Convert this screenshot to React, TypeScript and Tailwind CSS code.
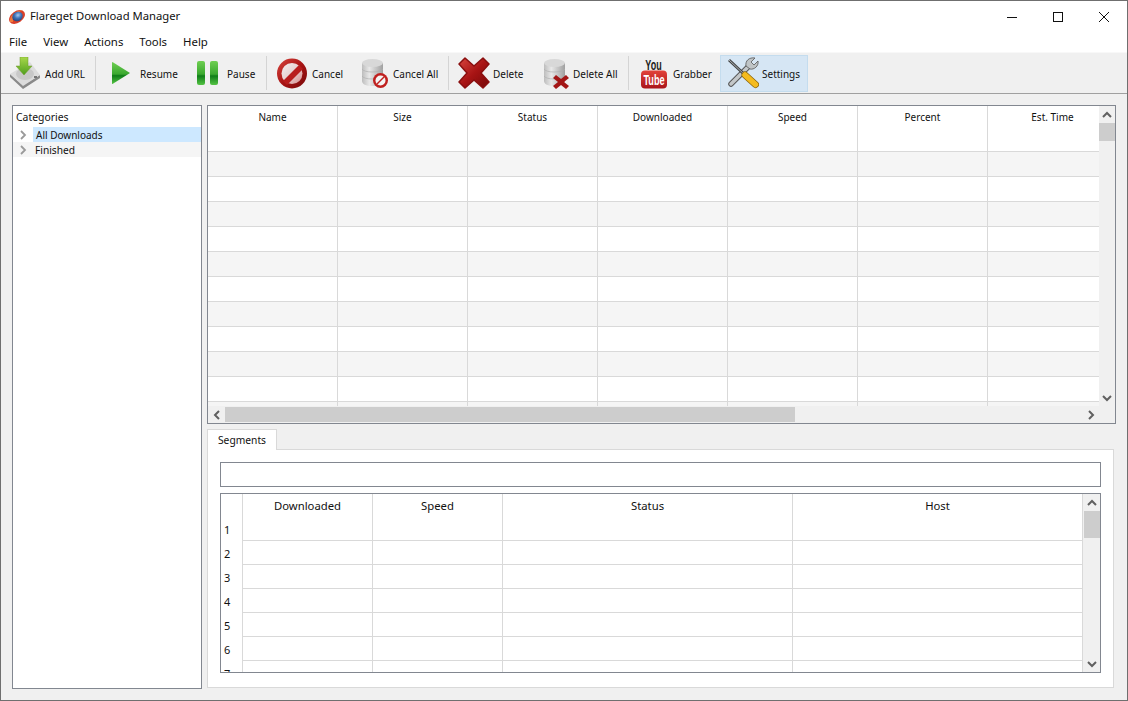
const uiFont = "font-['Noto_Sans',sans-serif]";

const FlareIcon = () => (
  <svg width="18" height="16" viewBox="0 0 18 16">
    <defs>
      <radialGradient id="flare" cx="0.6" cy="0.4" r="0.65">
        <stop offset="0" stopColor="#a5c8ee" />
        <stop offset="0.5" stopColor="#3f73b8" />
        <stop offset="1" stopColor="#24407a" />
      </radialGradient>
    </defs>
    <ellipse cx="9" cy="8" rx="8.8" ry="5.8" transform="rotate(-35 9 8)" fill="#d9402a" />
    <path d="M2 13 C1 8 6 2 15 1 C10 3 5 7 5 13Z" fill="#f07a3c" />
    <ellipse cx="9.5" cy="7.5" rx="5.4" ry="4.6" transform="rotate(-30 9.5 7.5)" fill="url(#flare)" />
  </svg>
);

const GradDefs = () => (
  <svg width="0" height="0" className="absolute">
    <defs>
      <linearGradient id="green" x1="0" y1="0" x2="0" y2="1">
        <stop offset="0" stopColor="#6fcf52" />
        <stop offset="0.55" stopColor="#3aa82f" />
        <stop offset="0.62" stopColor="#0f7d18" />
        <stop offset="1" stopColor="#55c444" />
      </linearGradient>
      <linearGradient id="arrowGreen" x1="0" y1="0" x2="0" y2="1">
        <stop offset="0" stopColor="#a8d84a" />
        <stop offset="1" stopColor="#4f9e1e" />
      </linearGradient>
      <linearGradient id="red" x1="0" y1="0" x2="1" y2="1">
        <stop offset="0" stopColor="#d8453e" />
        <stop offset="0.5" stopColor="#a81414" />
        <stop offset="1" stopColor="#760808" />
      </linearGradient>
      <linearGradient id="innerRed" x1="0" y1="0" x2="1" y2="1">
        <stop offset="0" stopColor="#f4f0f0" />
        <stop offset="0.5" stopColor="#e6d0d0" />
        <stop offset="1" stopColor="#d88888" />
      </linearGradient>
      <linearGradient id="metal" x1="0" y1="0" x2="1" y2="0">
        <stop offset="0" stopColor="#bdbdbd" />
        <stop offset="0.35" stopColor="#e8e8e8" />
        <stop offset="1" stopColor="#a0a0a0" />
      </linearGradient>
      <linearGradient id="yt" x1="0" y1="0" x2="0" y2="1">
        <stop offset="0" stopColor="#e2433a" />
        <stop offset="1" stopColor="#a9141a" />
      </linearGradient>
    </defs>
  </svg>
);

const AddUrlIcon = () => (
  <svg width="33" height="32" viewBox="0 0 33 32">
    <path d="M1 17 L14 28 L31 18 L31 21 L14 32 L1 20Z" fill="#8a8a8a" />
    <path d="M1 17 L21 5 L31 18 L14 29Z" fill="#dcdcdc" />
    <ellipse cx="16" cy="17" rx="9" ry="6" fill="#c8c8c8" />
    <path d="M11 0 H19 V9 H23 L15 18 L7 9 H11Z" fill="url(#arrowGreen)" stroke="#6f9a2a" strokeWidth="0.5" />
    <rect x="25" y="19" width="3" height="2" fill="#777" />
  </svg>
);

const ResumeIcon = () => (
  <svg width="32" height="26" viewBox="0 0 32 26">
    <path d="M7.5 2 L25 13 L7.5 24 Q7 24 7 23.5 V2.5 Q7 2 7.5 2Z" fill="url(#green)" />
  </svg>
);

const PauseIcon = () => (
  <svg width="31" height="26" viewBox="0 0 31 26">
    <rect x="4" y="1" width="8" height="24" rx="2" fill="url(#green)" />
    <rect x="17" y="1" width="8" height="24" rx="2" fill="url(#green)" />
  </svg>
);

const CancelIcon = () => (
  <svg width="33" height="32" viewBox="0 0 33 32">
    <circle cx="16" cy="16.5" r="15" fill="url(#red)" />
    <circle cx="16" cy="16.5" r="10.5" fill="url(#innerRed)" />
    <path d="M7 24 L23 8 L27 12 L11 28 Z" fill="#b81c1c" />
  </svg>
);

const Cylinder = () => (
  <>
    <path d="M2 6 V24 C2 27 6 29 12 29 C18 29 23 27 23 24 V6Z" fill="url(#metal)" />
    <ellipse cx="12.5" cy="6" rx="10.5" ry="4" fill="#d8d8d8" />
    <path d="M2 12 C4 16 20 16 23 12 M2 19 C4 23 20 23 23 19" stroke="#b0b0b0" strokeWidth="0.7" fill="none" />
  </>
);

const CancelAllIcon = () => (
  <svg width="32" height="32" viewBox="0 0 32 32">
    <g transform="translate(2 0)">
      <Cylinder />
    </g>
    <circle cx="22.5" cy="23.5" r="7.5" fill="#c0201f" />
    <circle cx="22.5" cy="23.5" r="5" fill="#f4f4f4" />
    <path d="M18.5 26.5 L25.5 19.5 L26.5 20.5 L19.5 27.5Z" fill="#c0201f" />
  </svg>
);

const DeleteIcon = () => (
  <svg width="32" height="32" viewBox="0 0 32 32">
    <path d="M1 7 L7 1 L16 9 L25 1 L31 7 L23 16 L31 25 L25 31 L16 23 L7 31 L1 25 L9 16Z" fill="url(#red)" strokeLinejoin="round" stroke="#8a0f0f" strokeWidth="1.5" />
  </svg>
);

const DeleteAllIcon = () => (
  <svg width="28" height="32" viewBox="0 0 28 32">
    <Cylinder />
    <path d="M11 21 L14 18 L19 22 L24 18 L27 21 L22 25 L27 29 L24 32 L19 28 L14 32 L11 29 L16 25Z" fill="#a31616" />
  </svg>
);

const YoutubeIcon = () => (
  <svg width="32" height="32" viewBox="0 0 32 32" className="overflow-visible">
    <text transform="translate(15.5 12.5) scale(0.6 1)" textAnchor="middle" fontFamily="'Liberation Sans', sans-serif" fontWeight="700" fontSize="15" fill="#222">You</text>
    <rect x="3" y="13.5" width="26" height="18" rx="4" fill="url(#yt)" />
    <text transform="translate(16 27.5) scale(0.61 1)" textAnchor="middle" fontFamily="'Liberation Sans', sans-serif" fontWeight="700" fontSize="15" fill="#fff">Tube</text>
  </svg>
);

const SettingsIcon = () => (
  <svg width="32" height="32" viewBox="0 0 32 32">
    {/* wrench */}
    <path d="M4 27 L22 9" stroke="#555" strokeWidth="5.5" strokeLinecap="round" />
    <path d="M4 27 L22 9" stroke="#c4c8ca" strokeWidth="3.5" strokeLinecap="round" />
    <path d="M19 9 C18 4 22 0 28 1 L24 5 L27 8 L31 4 C32 9 27 13 23 12Z" fill="#bfc4c6" stroke="#555" strokeWidth="0.8" />
    {/* screwdriver */}
    <path d="M2 3 L18 18" stroke="#444" strokeWidth="3" />
    <path d="M2 3 L18 18" stroke="#aab0b4" strokeWidth="1" />
    <path d="M18 18 L28.5 27.5" stroke="#8a650c" strokeWidth="7" strokeLinecap="round" />
    <path d="M18 18 L28.5 27.5" stroke="#f4bb1f" strokeWidth="5.5" strokeLinecap="round" />
  </svg>
);

const ToolButton = ({ icon, label, className }: { icon: React.ReactNode; label: string; className: string }) => (
  <div className={`flex items-center gap-[3px] pl-[6px] shrink-0 ${className}`}>
    {icon}
    <span className="text-[10px] text-[#111] whitespace-nowrap pt-[2px]">{label}</span>
  </div>
);

const ToolSep = () => <div className="w-px h-[34px] bg-[#d4d4d4] ml-[2px] mr-[3px] shrink-0" />;

const Chevron = ({ dir }: { dir: "up" | "down" | "left" | "right" }) => {
  const paths = {
    up: "M1 6 L5 2 L9 6",
    down: "M1 2 L5 6 L9 2",
    left: "M6 1 L2 5 L6 9",
    right: "M2 1 L6 5 L2 9",
  };
  const vertical = dir === "up" || dir === "down";
  return (
    <svg width={vertical ? 10 : 8} height={vertical ? 8 : 10} viewBox={vertical ? "0 0 10 8" : "0 0 8 10"}>
      <path d={paths[dir]} stroke="#606060" strokeWidth="2" fill="none" />
    </svg>
  );
};

const TreeArrow = () => (
  <svg width="7" height="10" viewBox="0 0 7 10" className="shrink-0">
    <path d="M1 1 L5 5 L1 9" stroke="#9a9a9a" strokeWidth="1.8" fill="none" />
  </svg>
);

const mainColumns = ["Name", "Size", "Status", "Downloaded", "Speed", "Percent", "Est. Time"];
const segColumns = [
  { name: "Downloaded", width: "w-[130px]" },
  { name: "Speed", width: "w-[130px]" },
  { name: "Status", width: "w-[290px]" },
  { name: "Host", width: "w-[290px]" },
];

const DownloadsTable = () => (
  <div className="h-[319px] border border-[#828790] bg-white flex flex-col shrink-0">
    <div className="flex h-[300px]">
      <div className="flex-1 overflow-hidden">
        <div className="flex h-[46px] border-b border-[#d9d9d9] w-[910px]">
          {mainColumns.map((c) => (
            <div key={c} className="w-[130px] shrink-0 border-r border-[#d9d9d9] text-center text-[10px] leading-[15px] text-[#111] pt-[4px]">
              {c}
            </div>
          ))}
        </div>
        {[...Array(11)].map((_, i) => (
          <div key={i} className={`flex h-[25px] border-b border-[#d9d9d9] w-[910px] ${i % 2 === 0 ? "bg-[#f5f5f5]" : "bg-white"}`}>
            {mainColumns.map((c) => (
              <div key={c} className="w-[130px] shrink-0 border-r border-[#d9d9d9]" />
            ))}
          </div>
        ))}
      </div>
      <div className="w-[16px] bg-[#f0f0f0] flex flex-col shrink-0">
        <div className="h-[17px] flex items-center justify-center"><Chevron dir="up" /></div>
        <div className="h-[18px] bg-[#cdcdcd]" />
        <div className="flex-1" />
        <div className="h-[17px] flex items-center justify-center"><Chevron dir="down" /></div>
      </div>
    </div>
    <div className="h-[17px] bg-[#f0f0f0] flex items-center">
      <div className="w-[17px] flex justify-center"><Chevron dir="left" /></div>
      <div className="w-[570px] h-[15px] bg-[#cdcdcd]" />
      <div className="flex-1" />
      <div className="w-[17px] flex justify-center"><Chevron dir="right" /></div>
      <div className="w-[16px]" />
    </div>
  </div>
);

const SegmentsPane = () => (
  <div className="flex flex-col w-[907px]">
    <div className="relative z-10 -mb-px w-[70px] h-[21px] bg-white border border-b-0 border-[#d9d9d9] text-[10.25px] text-[#111] text-center leading-[21px]">
      Segments
    </div>
    <div className="bg-white border border-[#d9d9d9] pt-[12px] px-[12px] pb-[14px]">
      <div className="h-[25px] w-[881px] border border-[#828790]" />
      <div className="mt-[6px] h-[180px] w-[881px] border border-[#828790] flex overflow-hidden">
        <div className="w-[22px] shrink-0 border-r border-[#d9d9d9] pt-[24px] text-[11px] text-[#111] pl-[3px]">
          {[1, 2, 3, 4, 5, 6, 7].map((n) => (
            <div key={n} className="h-[24px] leading-[24px]">{n}</div>
          ))}
        </div>
        <div className="flex-1 overflow-hidden">
          <div className="flex h-[47px] border-b border-[#d9d9d9]">
            {segColumns.map((c) => (
              <div key={c.name} className={`${c.width} shrink-0 border-r border-[#d9d9d9] text-center text-[11.3px] leading-[16px] text-[#111] pt-[4px]`}>
                {c.name}
              </div>
            ))}
          </div>
          {[...Array(6)].map((_, i) => (
            <div key={i} className="flex h-[24px] border-b border-[#d9d9d9]">
              {segColumns.map((c) => (
                <div key={c.name} className={`${c.width} shrink-0 border-r border-[#d9d9d9]`} />
              ))}
            </div>
          ))}
        </div>
        <div className="w-[17px] bg-[#f0f0f0] flex flex-col shrink-0">
          <div className="h-[17px] flex items-center justify-center"><Chevron dir="up" /></div>
          <div className="h-[27px] ml-[1px] bg-[#cdcdcd]" />
          <div className="flex-1" />
          <div className="h-[17px] flex items-center justify-center"><Chevron dir="down" /></div>
        </div>
      </div>
    </div>
  </div>
);

export default function App() {
  return (
    <div className={`w-[1128px] h-[701px] border border-[#6f6f6f] bg-[#f0f0f0] flex flex-col overflow-hidden ${uiFont}`}>
      <GradDefs />
      {/* title bar */}
      <div className="h-[31px] bg-white flex items-center justify-between shrink-0">
        <div className="flex items-center pl-[7px] gap-[4px]">
          <FlareIcon />
          <span className="text-[11.25px] text-[#111]">Flareget Download Manager</span>
        </div>
        <div className="flex">
          <div className="w-[46px] h-[31px] flex items-center justify-center">
            <svg width="10" height="10" viewBox="0 0 10 10"><path d="M0 5.5 H10" stroke="#111" /></svg>
          </div>
          <div className="w-[46px] h-[31px] flex items-center justify-center">
            <svg width="10" height="10" viewBox="0 0 10 10"><rect x="0.5" y="0.5" width="9" height="9" stroke="#111" fill="none" /></svg>
          </div>
          <div className="w-[46px] h-[31px] flex items-center justify-center">
            <svg width="10" height="10" viewBox="0 0 10 10"><path d="M0 0 L10 10 M10 0 L0 10" stroke="#111" /></svg>
          </div>
        </div>
      </div>
      {/* menu */}
      <div className="h-[20px] bg-white flex items-center text-[11.4px] text-[#111] shrink-0">
        {["File", "View", "Actions", "Tools", "Help"].map((m) => (
          <div key={m} className="px-[8px]">{m}</div>
        ))}
      </div>
      {/* toolbar */}
      <div className="h-[42px] border-t border-[#f8f8f8] border-b border-b-[#a0a0a0] flex items-center pl-[2px] shrink-0">
        <ToolButton icon={<AddUrlIcon />} label="Add URL" className="w-[90px]" />
        <ToolSep />
        <ToolButton icon={<ResumeIcon />} label="Resume" className="w-[88px]" />
        <ToolButton icon={<PauseIcon />} label="Pause" className="w-[77px]" />
        <ToolSep />
        <ToolButton icon={<CancelIcon />} label="Cancel" className="w-[82px]" />
        <ToolButton icon={<CancelAllIcon />} label="Cancel All" className="w-[94px]" />
        <ToolSep />
        <ToolButton icon={<DeleteIcon />} label="Delete" className="w-[84px]" />
        <ToolButton icon={<DeleteAllIcon />} label="Delete All" className="w-[90px]" />
        <ToolSep />
        <ToolButton icon={<YoutubeIcon />} label="Grabber" className="w-[88px]" />
        <ToolButton icon={<SettingsIcon />} label="Settings" className="w-[88px] h-[37px] bg-[#d6e6f4] border border-[#c4dcee] pl-[5px]" />
      </div>
      {/* main */}
      <div className="flex-1 flex pt-[11px] pl-[11px] gap-[5px] min-h-0">
        <div className="w-[190px] h-[584px] border border-[#828790] bg-white shrink-0">
          <div className="h-[21px] pl-[3px] text-[10.4px] text-[#111] leading-[22px]">Categories</div>
          <div className="h-[15px] flex items-center">
            <div className="w-[20px] flex justify-end pr-[6px] shrink-0"><TreeArrow /></div>
            <div className="flex-1 h-[15px] bg-[#cde8ff] text-[10px] text-[#111] leading-[17px] pl-[3px]">All Downloads</div>
          </div>
          <div className="h-[15px] flex items-center bg-[#f5f5f5]">
            <div className="w-[20px] flex justify-end pr-[6px] shrink-0"><TreeArrow /></div>
            <div className="flex-1 h-[15px] text-[10.2px] text-[#111] leading-[17px] pl-[2px]">Finished</div>
          </div>
        </div>
        <div className="w-[909px] flex flex-col gap-[5px]">
          <DownloadsTable />
          <SegmentsPane />
        </div>
      </div>
    </div>
  );
}
